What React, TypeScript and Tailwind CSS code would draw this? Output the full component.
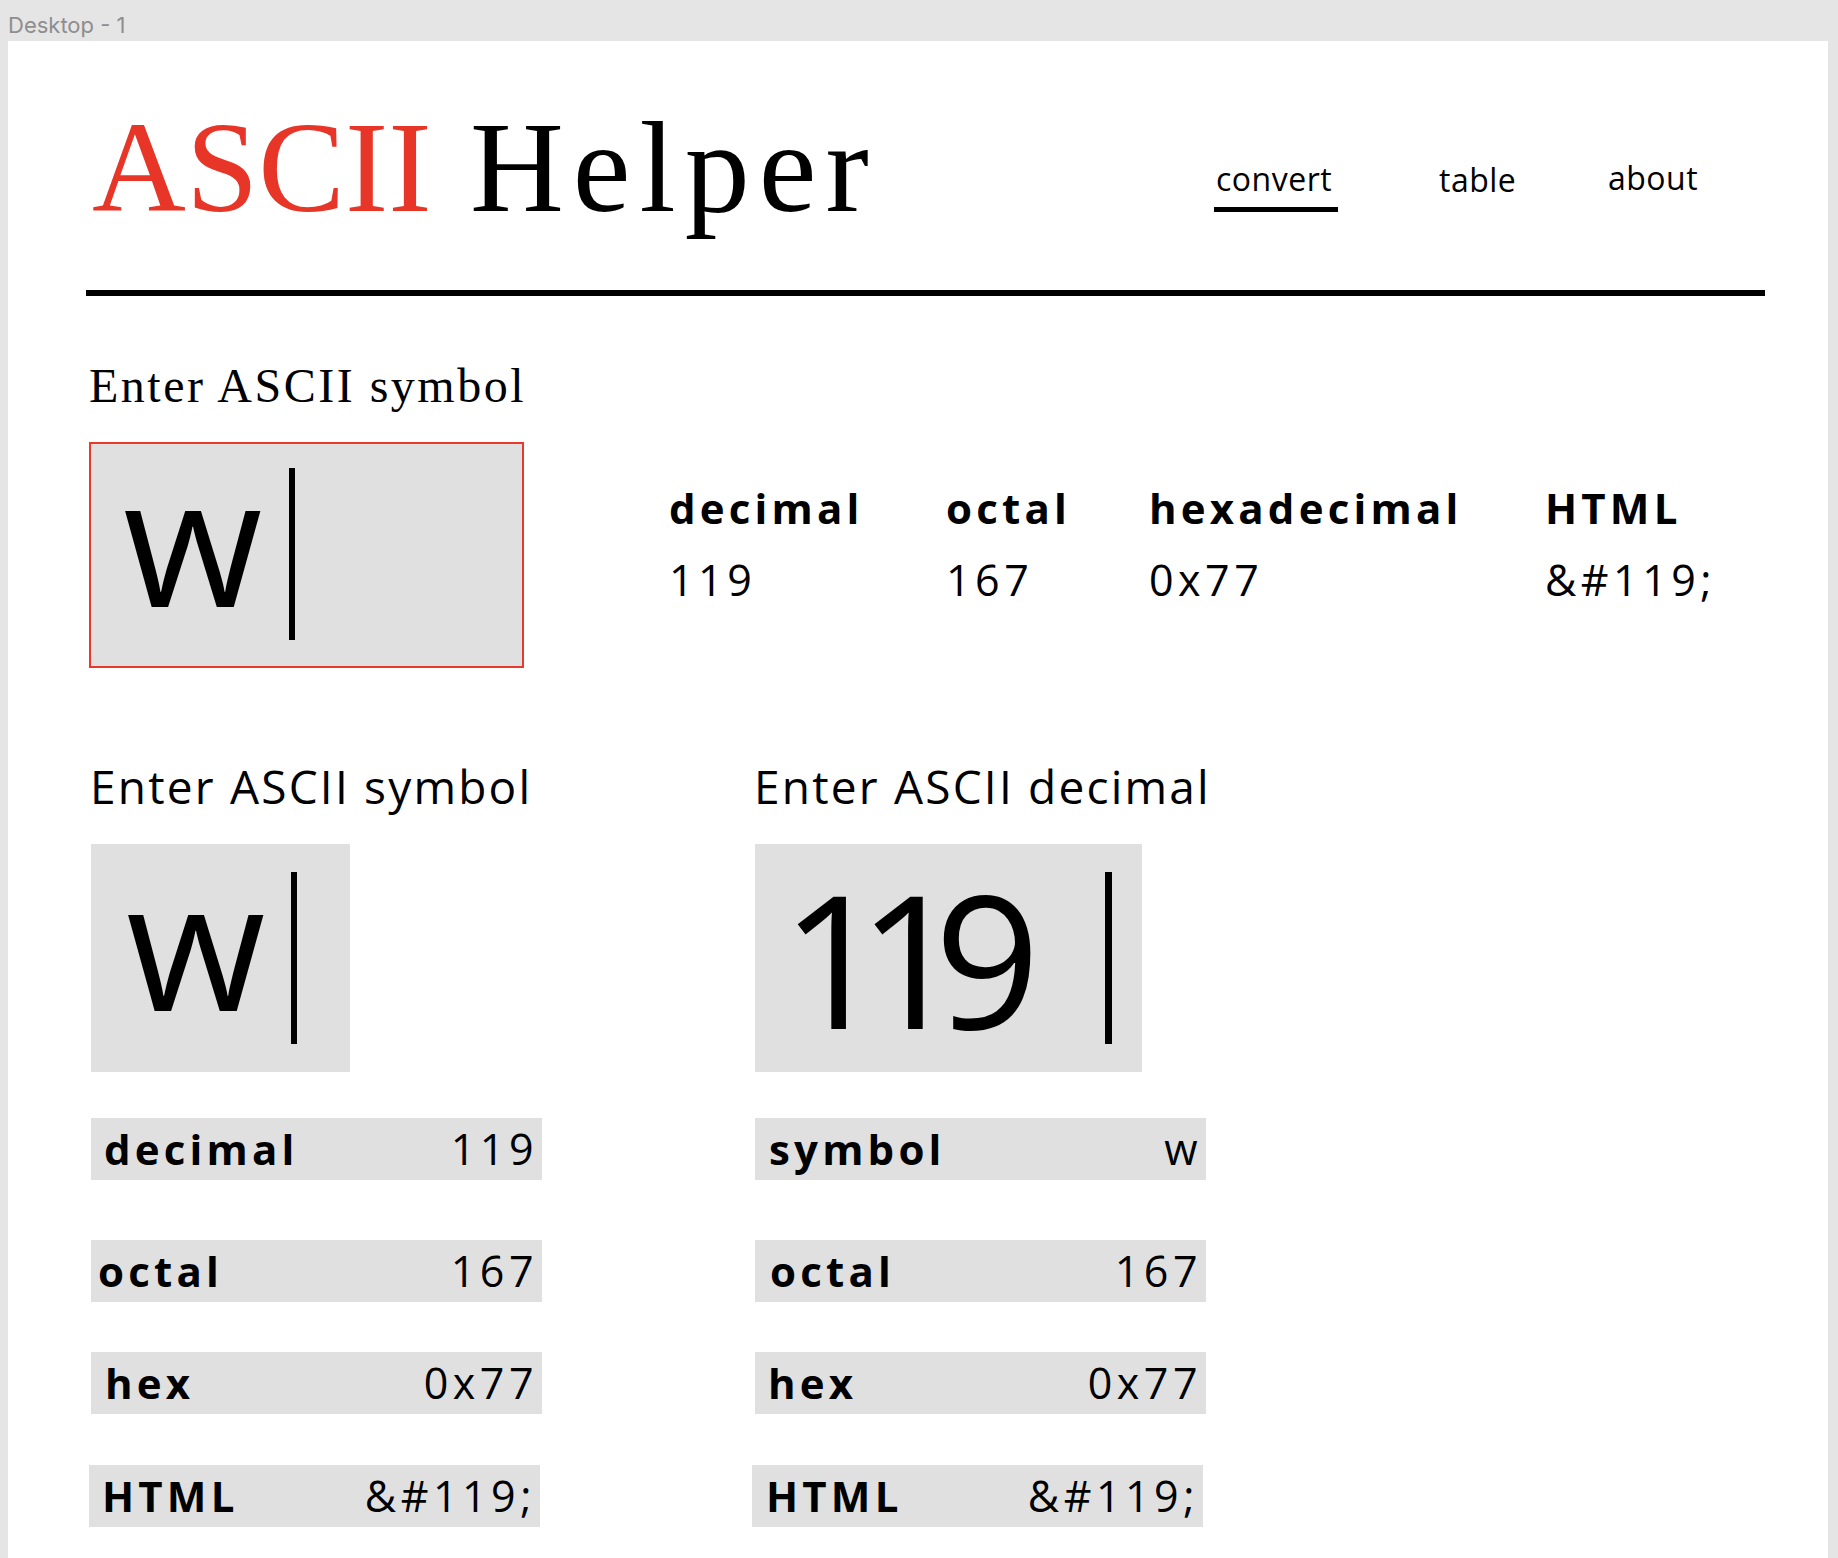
import React from "react";

const sans = "font-['Open_Sans',sans-serif]";
const serif = "font-['Liberation_Serif',serif]";

function Row({
  label,
  value,
  className,
  pl,
}: {
  label: string;
  value: string;
  className: string;
  pl: string;
}) {
  return (
    <div
      className={`flex h-[62px] w-[451px] items-center justify-between bg-[#e0e0e0] pr-[4px] ${sans} leading-[62px] text-black ${pl} ${className}`}
    >
      <span className="text-[42px] font-bold tracking-[4.2px]">{label}</span>
      <span className="text-[43px] tracking-[4.5px]">{value}</span>
    </div>
  );
}

const HTML_CODE = "&#119;";

export default function App() {
  return (
    <div className="flex min-h-[1558px] w-[1838px] flex-col bg-[#e5e5e5]">
      <div className="h-[41px] shrink-0 pl-[8px] pt-[14px] font-['Inter',sans-serif] text-[22px] leading-none text-[#8e8e8e]">
        Desktop - 1
      </div>
      <div className="ml-[8px] flex w-[1820px] flex-1 flex-col bg-white pl-[81px] pt-[61px]">
        {/* Header */}
        <div className="flex items-start">
          <div className="w-[1127px] shrink-0">
            <h1
              className={`ml-[3px] whitespace-nowrap ${serif} text-[130px] font-normal leading-none text-black`}
            >
              <span className="tracking-[0px] text-[#e73527]">ASCII</span>{" "}
              <span className="ml-[6px] tracking-[9px]">Helper</span>
            </h1>
          </div>
          <nav
            className={`mt-[61px] flex items-start ${sans} text-[32px] leading-none tracking-[0.5px] text-black`}
          >
            <div className="w-[223px]">
              <div>convert</div>
              <div className="-ml-[2px] mt-[12px] h-[5px] w-[124px] bg-black" />
            </div>
            <div className="mt-[1px] w-[169px]">table</div>
            <div className="-mt-[1px]">about</div>
          </nav>
        </div>

        <div className="-ml-[3px] mt-[58px] h-[6px] w-[1679px] bg-black" />

        {/* Top converter */}
        <h2
          className={`mt-[66px] ${serif} text-[48px] font-normal leading-none tracking-[2.5px] text-black`}
        >
          Enter ASCII symbol
        </h2>
        <div className="mt-[32px] flex items-start">
          <div className="flex h-[226px] w-[435px] shrink-0 items-start border-2 border-[#e8392b] bg-[#e0e0e0] pl-[32px]">
            <span className={`mt-[4px] ${sans} text-[180px] leading-[180px] text-black`}>w</span>
            <div className="ml-[27px] mt-[24px] h-[172px] w-[6px] bg-black" />
          </div>
          <div
            className={`ml-[145px] mt-[45px] grid grid-cols-[277px_203px_396px_auto] gap-y-[29px] ${sans} leading-none text-black`}
          >
            <div className="text-[42px] font-bold tracking-[4.2px]">decimal</div>
            <div className="text-[42px] font-bold tracking-[4.2px]">octal</div>
            <div className="text-[42px] font-bold tracking-[4.2px]">hexadecimal</div>
            <div className="text-[42px] font-bold tracking-[4.2px]">HTML</div>
            <div className="text-[43px] tracking-[4.5px]">119</div>
            <div className="text-[43px] tracking-[4.5px]">167</div>
            <div className="text-[43px] tracking-[4.5px]">0x77</div>
            <div className="text-[43px] tracking-[4.5px]">{HTML_CODE}</div>
          </div>
        </div>

        {/* Bottom converters */}
        <div className="mt-[95px] grid grid-cols-[664px_auto]">
          <div className="flex flex-col">
            <h3 className={`ml-[1px] ${sans} text-[46px] font-normal leading-none tracking-[2.2px] text-black`}>
              Enter ASCII symbol
            </h3>
            <div className="ml-[2px] mt-[35px] flex h-[228px] w-[259px] items-start bg-[#e0e0e0] pl-[35px]">
              <span className={`mt-[8px] ${sans} text-[180px] leading-[180px] text-black`}>w</span>
              <div className="ml-[26px] mt-[28px] h-[172px] w-[6px] bg-black" />
            </div>
            <Row label="decimal" value="119" className="ml-[2px] mt-[46px]" pl="pl-[13px]" />
            <Row label="octal" value="167" className="ml-[2px] mt-[60px]" pl="pl-[7px]" />
            <Row label="hex" value="0x77" className="ml-[2px] mt-[50px]" pl="pl-[14px]" />
            <Row label="HTML" value={HTML_CODE} className="ml-0 mt-[51px]" pl="pl-[13px]" />
          </div>
          <div className="flex flex-col">
            <h3 className={`ml-[1px] ${sans} text-[46px] font-normal leading-none tracking-[2.2px] text-black`}>
              Enter ASCII decimal
            </h3>
            <div className="ml-[2px] mt-[35px] flex h-[228px] w-[387px] items-start bg-[#e0e0e0] pl-[26px]">
              <span className={`mt-[21px] ${sans} text-[185px] leading-[185px] tracking-[-29px] text-black`}>119</span>
              <div className="ml-[94px] mt-[28px] h-[172px] w-[7px] bg-black" />
            </div>
            <Row label="symbol" value="w" className="ml-[2px] mt-[46px]" pl="pl-[14px]" />
            <Row label="octal" value="167" className="ml-[2px] mt-[60px]" pl="pl-[15px]" />
            <Row label="hex" value="0x77" className="ml-[2px] mt-[50px]" pl="pl-[13px]" />
            <Row label="HTML" value={HTML_CODE} className="-ml-[1px] mt-[51px]" pl="pl-[14px]" />
          </div>
        </div>
      </div>
    </div>
  );
}
